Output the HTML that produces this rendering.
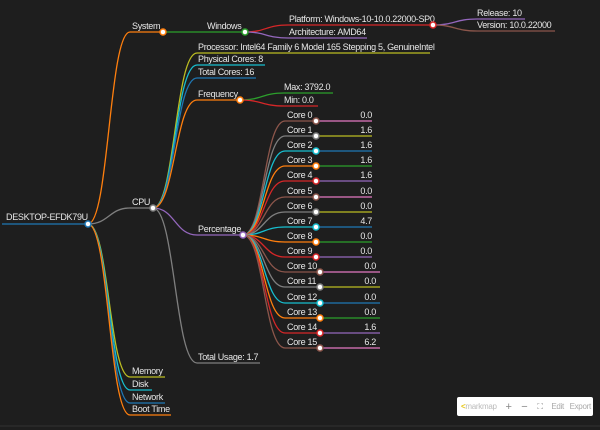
<!DOCTYPE html>
<html><head><meta charset="utf-8"><style>
html,body{margin:0;padding:0;background:#1e1e1e;width:600px;height:430px;overflow:hidden}
svg{position:absolute;left:0;top:0}
text{font-family:"Liberation Sans",sans-serif;font-size:9px;letter-spacing:-0.3px;fill:#e8e8e8}
path{fill:none;stroke-width:1.3}
circle{stroke-width:1.5}
.tb{position:absolute;left:457px;top:397px;width:136px;height:19px;background:#fff;border-radius:2px;font-family:"Liberation Sans",sans-serif;font-size:8px;color:#aaa;display:flex;align-items:center;gap:0;letter-spacing:-0.3px}
.tb span{display:inline-block}
</style></head><body>
<svg width="600" height="430" viewBox="0 0 600 430">
<line x1="0" y1="426" x2="600" y2="426" stroke="#333" stroke-width="1"/>
<path d="M2 224H88" stroke="#1f77b4"/>
<text x="6" y="220">DESKTOP-EFDK79U</text>
<path d="M88 224C109 224 109 32 130 32H163" stroke="#ff7f0e"/>
<path d="M88 224C109 224 109 208 130 208H153" stroke="#7f7f7f"/>
<path d="M88 224C109 224 109 377 130 377H165" stroke="#bcbd22"/>
<path d="M88 224C109 224 109 390 130 390H152" stroke="#17becf"/>
<path d="M88 224C109 224 109 403 130 403H165" stroke="#1f77b4"/>
<path d="M88 224C109 224 109 415 130 415H171" stroke="#ff7f0e"/>
<text x="132" y="29">System</text>
<text x="132" y="205">CPU</text>
<text x="132" y="374">Memory</text>
<text x="132" y="387">Disk</text>
<text x="132" y="400">Network</text>
<text x="132" y="412">Boot Time</text>
<path d="M163 32H245" stroke="#2ca02c"/>
<text x="207" y="29">Windows</text>
<path d="M245 32C266 32 266 25 288 25H433" stroke="#d62728"/>
<path d="M245 32C266 32 266 38 288 38H367" stroke="#9467bd"/>
<text x="289" y="22">Platform: Windows-10-10.0.22000-SP0</text>
<text x="289" y="35">Architecture: AMD64</text>
<path d="M433 25C455 25 455 19 477 19H525" stroke="#9467bd"/>
<path d="M433 25C455 25 455 31 477 31H555" stroke="#8c564b"/>
<text x="477" y="16">Release: 10</text>
<text x="477" y="28">Version: 10.0.22000</text>
<path d="M153 208C175 208 175 53 197 53H430" stroke="#bcbd22"/>
<path d="M153 208C175 208 175 65 197 65H265" stroke="#17becf"/>
<path d="M153 208C175 208 175 78 197 78H256" stroke="#1f77b4"/>
<path d="M153 208C175 208 175 100 197 100H240" stroke="#ff7f0e"/>
<path d="M153 208C175 208 175 235 197 235H243" stroke="#9467bd"/>
<path d="M153 208C175 208 175 363 197 363H260" stroke="#7f7f7f"/>
<text x="198" y="50">Processor: Intel64 Family 6 Model 165 Stepping 5, GenuineIntel</text>
<text x="198" y="62">Physical Cores: 8</text>
<text x="198" y="75">Total Cores: 16</text>
<text x="198" y="97">Frequency</text>
<text x="198" y="232">Percentage</text>
<text x="198" y="360">Total Usage: 1.7</text>
<path d="M240 100C262 100 262 93 284 93H333" stroke="#2ca02c"/>
<path d="M240 100C262 100 262 106 284 106H318" stroke="#d62728"/>
<text x="284" y="90">Max: 3792.0</text>
<text x="284" y="103">Min: 0.0</text>
<g>
<path d="M243 235C264 235 264 121 285 121H316" stroke="#8c564b"/><path d="M316 121H372" stroke="#e377c2"/>
<path d="M243 235C264 235 264 136 285 136H316" stroke="#7f7f7f"/><path d="M316 136H372" stroke="#bcbd22"/>
<path d="M243 235C264 235 264 151 285 151H316" stroke="#17becf"/><path d="M316 151H372" stroke="#1f77b4"/>
<path d="M243 235C264 235 264 166 285 166H316" stroke="#ff7f0e"/><path d="M316 166H372" stroke="#2ca02c"/>
<path d="M243 235C264 235 264 181 285 181H316" stroke="#d62728"/><path d="M316 181H372" stroke="#9467bd"/>
<path d="M243 235C264 235 264 197 285 197H316" stroke="#8c564b"/><path d="M316 197H372" stroke="#e377c2"/>
<path d="M243 235C264 235 264 212 285 212H316" stroke="#7f7f7f"/><path d="M316 212H372" stroke="#bcbd22"/>
<path d="M243 235C264 235 264 227 285 227H316" stroke="#17becf"/><path d="M316 227H372" stroke="#1f77b4"/>
<path d="M243 235C264 235 264 242 285 242H316" stroke="#ff7f0e"/><path d="M316 242H372" stroke="#2ca02c"/>
<path d="M243 235C264 235 264 257 285 257H316" stroke="#d62728"/><path d="M316 257H372" stroke="#9467bd"/>
<path d="M243 235C264 235 264 272 285 272H320" stroke="#8c564b"/><path d="M320 272H380" stroke="#e377c2"/>
<path d="M243 235C264 235 264 287 285 287H320" stroke="#7f7f7f"/><path d="M320 287H380" stroke="#bcbd22"/>
<path d="M243 235C264 235 264 303 285 303H320" stroke="#17becf"/><path d="M320 303H380" stroke="#1f77b4"/>
<path d="M243 235C264 235 264 318 285 318H320" stroke="#ff7f0e"/><path d="M320 318H380" stroke="#2ca02c"/>
<path d="M243 235C264 235 264 333 285 333H320" stroke="#d62728"/><path d="M320 333H380" stroke="#9467bd"/>
<path d="M243 235C264 235 264 348 285 348H320" stroke="#8c564b"/><path d="M320 348H380" stroke="#e377c2"/>
</g>
<g>
<text x="287" y="118">Core 0</text><text x="372" y="118" text-anchor="end">0.0</text>
<text x="287" y="133">Core 1</text><text x="372" y="133" text-anchor="end">1.6</text>
<text x="287" y="148">Core 2</text><text x="372" y="148" text-anchor="end">1.6</text>
<text x="287" y="163">Core 3</text><text x="372" y="163" text-anchor="end">1.6</text>
<text x="287" y="178">Core 4</text><text x="372" y="178" text-anchor="end">1.6</text>
<text x="287" y="194">Core 5</text><text x="372" y="194" text-anchor="end">0.0</text>
<text x="287" y="209">Core 6</text><text x="372" y="209" text-anchor="end">0.0</text>
<text x="287" y="224">Core 7</text><text x="372" y="224" text-anchor="end">4.7</text>
<text x="287" y="239">Core 8</text><text x="372" y="239" text-anchor="end">0.0</text>
<text x="287" y="254">Core 9</text><text x="372" y="254" text-anchor="end">0.0</text>
<text x="287" y="269">Core 10</text><text x="376" y="269" text-anchor="end">0.0</text>
<text x="287" y="284">Core 11</text><text x="376" y="284" text-anchor="end">0.0</text>
<text x="287" y="300">Core 12</text><text x="376" y="300" text-anchor="end">0.0</text>
<text x="287" y="315">Core 13</text><text x="376" y="315" text-anchor="end">0.0</text>
<text x="287" y="330">Core 14</text><text x="376" y="330" text-anchor="end">1.6</text>
<text x="287" y="345">Core 15</text><text x="376" y="345" text-anchor="end">6.2</text>
</g>
<g fill="#fff">
<circle cx="88" cy="224" r="3" stroke="#1f77b4"/>
<circle cx="163" cy="32" r="3" stroke="#ff7f0e"/>
<circle cx="153" cy="208" r="3" stroke="#7f7f7f"/>
<circle cx="245" cy="32" r="3" stroke="#2ca02c"/>
<circle cx="433" cy="25" r="3" stroke="#d62728"/>
<circle cx="240" cy="100" r="3" stroke="#ff7f0e"/>
<circle cx="243" cy="235" r="3" stroke="#9467bd"/>
<circle cx="316" cy="121" r="3" stroke="#8c564b"/>
<circle cx="316" cy="136" r="3" stroke="#7f7f7f"/>
<circle cx="316" cy="151" r="3" stroke="#17becf"/>
<circle cx="316" cy="166" r="3" stroke="#ff7f0e"/>
<circle cx="316" cy="181" r="3" stroke="#d62728"/>
<circle cx="316" cy="197" r="3" stroke="#8c564b"/>
<circle cx="316" cy="212" r="3" stroke="#7f7f7f"/>
<circle cx="316" cy="227" r="3" stroke="#17becf"/>
<circle cx="316" cy="242" r="3" stroke="#ff7f0e"/>
<circle cx="316" cy="257" r="3" stroke="#d62728"/>
<circle cx="320" cy="272" r="3" stroke="#8c564b"/>
<circle cx="320" cy="287" r="3" stroke="#7f7f7f"/>
<circle cx="320" cy="303" r="3" stroke="#17becf"/>
<circle cx="320" cy="318" r="3" stroke="#ff7f0e"/>
<circle cx="320" cy="333" r="3" stroke="#d62728"/>
<circle cx="320" cy="348" r="3" stroke="#8c564b"/>
</g>
</svg>
<div class="tb">
<span style="color:#e6c619;margin-left:4px;font-weight:bold">&lt;</span><span style="width:36px;color:#bbb">markmap</span>
<span style="width:16px;text-align:center;font-size:11px;color:#888">+</span>
<span style="width:16px;text-align:center;font-size:11px;color:#888">−</span>
<span style="width:16px;text-align:center;color:#888">⛶</span>
<span style="width:20px;text-align:center">Edit</span>
<span style="width:26px;text-align:center">Export</span>
</div>
</body></html>
